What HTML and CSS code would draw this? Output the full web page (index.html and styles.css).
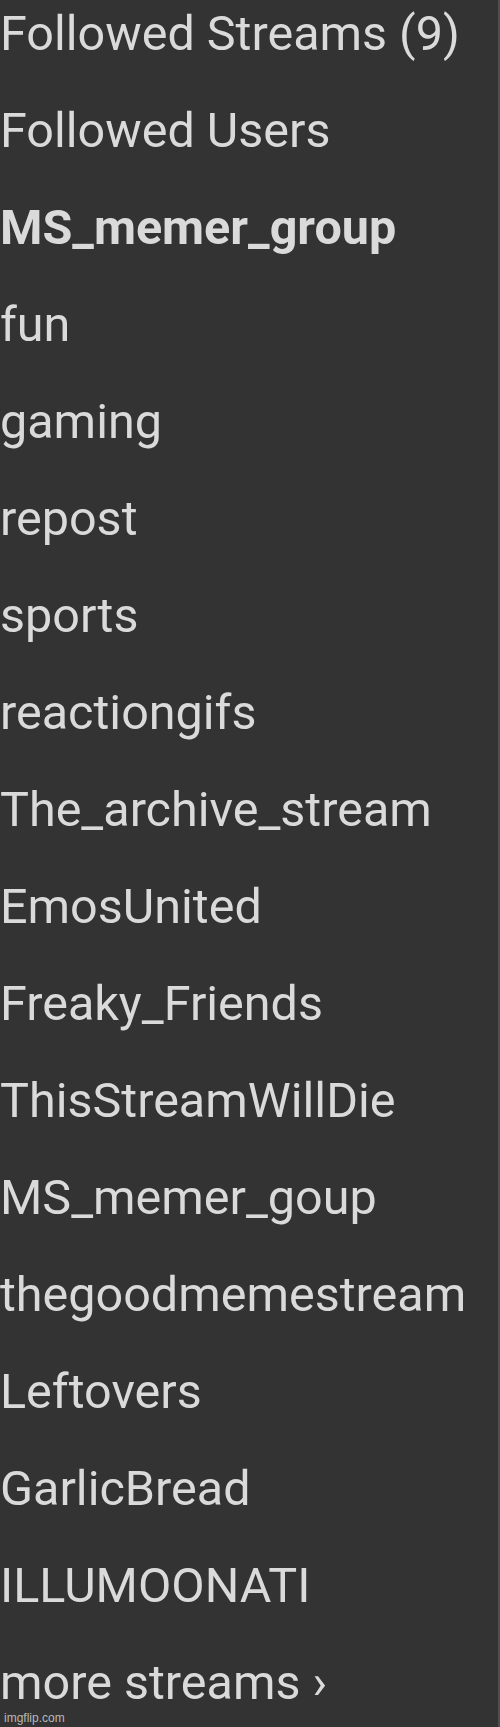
FILE: index.html
```html
<!DOCTYPE html>
<html>
<head>
<meta charset="utf-8">
<link rel="stylesheet" href="styles.css">
</head>
<body>
<div class="panel">
  <ul class="list">
    <li>Followed Streams (9)</li>
    <li>Followed Users</li>
    <li class="bold">MS_memer_group</li>
    <li>fun</li>
    <li>gaming</li>
    <li>repost</li>
    <li>sports</li>
    <li>reactiongifs</li>
    <li>The_archive_stream</li>
    <li>EmosUnited</li>
    <li>Freaky_Friends</li>
    <li>ThisStreamWillDie</li>
    <li>MS_memer_goup</li>
    <li>thegoodmemestream</li>
    <li>Leftovers</li>
    <li>GarlicBread</li>
    <li>ILLUMOONATI</li>
    <li>more streams ›</li>
  </ul>
  <div class="watermark">imgflip.com</div>
</div>
</body>
</html>
```
FILE: styles.css
```css
html, body {
  margin: 0;
  padding: 0;
  background: #333333;
}
.panel {
  position: relative;
  width: 498px;
  height: 1727px;
  overflow: hidden;
  background: #333333;
  border-right: 2px solid #4e4e4e;
}
.list {
  list-style: none;
  margin: 0;
  padding: 5px 0 0 0;
  display: flex;
  flex-direction: column;
  gap: 40px;
  font-family: Roboto, "Noto Sans", sans-serif;
  font-size: 48.5px;
  line-height: 57px;
  color: #dadada;
  white-space: nowrap;
}
.bold {
  font-weight: 700;
}
.watermark {
  position: absolute;
  left: 4px;
  bottom: 2px;
  font-family: "Liberation Sans", Arial, sans-serif;
  font-size: 12px;
  color: #b8b8b8;
}
```
